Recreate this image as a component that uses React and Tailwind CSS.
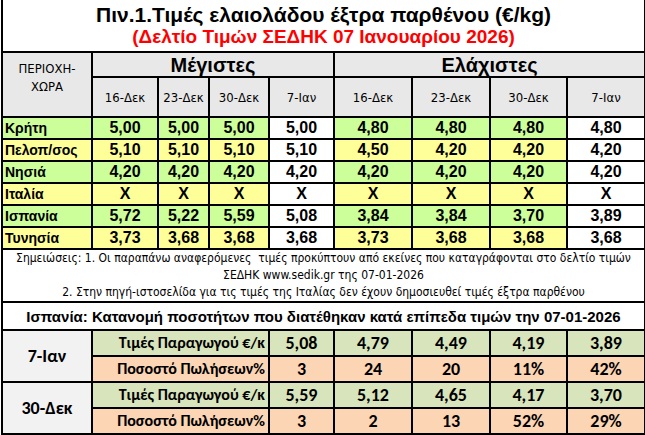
import React from 'react';

const narrow = "font-['Liberation_Sans_Narrow','Arial_Narrow','DejaVu_Sans_Condensed','Liberation_Sans',sans-serif]";
const calibri = "font-['Carlito','Lato','Open_Sans',sans-serif]";

const regions = [
  { name: 'Κρήτη', bg: 'bg-[#ccff99]', max: ['5,00', '5,00', '5,00', '5,00'], min: ['4,80', '4,80', '4,80', '4,80'] },
  { name: 'Πελοπ/σος', bg: 'bg-[#ffff99]', max: ['5,10', '5,10', '5,10', '5,10'], min: ['4,50', '4,20', '4,20', '4,20'] },
  { name: 'Νησιά', bg: 'bg-[#ccff99]', max: ['4,20', '4,20', '4,20', '4,20'], min: ['4,20', '4,20', '4,20', '4,20'] },
  { name: 'Ιταλία', bg: 'bg-[#ffff99]', max: ['X', 'X', 'X', 'X'], min: ['X', 'X', 'X', 'X'] },
  { name: 'Ισπανία', bg: 'bg-[#ccff99]', max: ['5,72', '5,22', '5,59', '5,08'], min: ['3,84', '3,84', '3,70', '3,89'] },
  { name: 'Τυνησία', bg: 'bg-[#ffff99]', max: ['3,73', '3,68', '3,68', '3,68'], min: ['3,73', '3,68', '3,68', '3,68'] },
];

const dates = ['16-Δεκ', '23-Δεκ', '30-Δεκ', '7-Ιαν'];

const spain = [
  { date: '7-Ιαν', prices: ['5,08', '4,79', '4,49', '4,19', '3,89'], shares: ['3', '24', '20', '11%', '42%'] },
  { date: '30-Δεκ', prices: ['5,59', '5,12', '4,65', '4,17', '3,70'], shares: ['3', '2', '13', '52%', '29%'] },
];

const cell = 'border-2 border-black p-0';

export default function App() {
  return (
    <div className="w-[645px] h-[435px] bg-white overflow-hidden font-['Liberation_Sans',Arial,sans-serif] text-black">
      <table className="border-collapse table-fixed w-[643px] ml-px">
        <colgroup>
          <col className="w-[90px]" />
          <col className="w-[66px]" />
          <col className="w-[51px]" />
          <col className="w-[60px]" />
          <col className="w-[65px]" />
          <col className="w-[78px]" />
          <col className="w-[78px]" />
          <col className="w-[77px]" />
          <col className="w-[78px]" />
        </colgroup>
        <tbody>
          {/* title */}
          <tr className="h-[52px]">
            <td colSpan={9} className="border-2 border-black border-t-0 p-0 text-center leading-[22px]">
              <div className="text-[21px] font-bold pt-[1px]">Πιν.1.Τιμές ελαιολάδου έξτρα παρθένου (€/kg)</div>
              <div className="text-[19px] font-bold text-[#ff0000]">(Δελτίο Τιμών ΣΕΔΗΚ 07 Ιανουαρίου 2026)</div>
            </td>
          </tr>

          {/* header */}
          <tr className="h-[25px] bg-[#e8e8e8]">
            <td rowSpan={2} className={`${cell} ${narrow} align-top text-center text-[13px] leading-[18px] pt-[7px]`}>
              ΠΕΡΙΟΧΗ-<br />ΧΩΡΑ
            </td>
            <td colSpan={4} className={`${cell} text-center text-[20px] font-bold leading-none`}>Μέγιστες</td>
            <td colSpan={4} className={`${cell} text-center text-[20px] font-bold leading-none`}>Ελάχιστες</td>
          </tr>
          <tr className="h-[40px] bg-[#e8e8e8]">
            {[...dates, ...dates].map((d, i) => (
              <td key={i} className={`${cell} ${narrow} text-center text-[13px] leading-none`}>{d}</td>
            ))}
          </tr>

          {/* data rows */}
          {regions.map(r => (
            <tr key={r.name} className={`h-[22px] ${r.bg}`}>
              <td className={`${cell} text-left pl-[2px] text-[14px] font-bold leading-none`}>{r.name}</td>
              {[...r.max, ...r.min].map((v, i) => (
                <td key={i} className={`${cell} text-center text-[16px] font-bold leading-none ${i === 3 || i === 7 ? 'bg-white' : ''}`}>{v}</td>
              ))}
            </tr>
          ))}

          {/* notes */}
          <tr className="h-[51px]">
            <td colSpan={9} className={`${cell} ${narrow} text-center text-[12px] leading-[17px]`}>
              <div>Σημειώσεις: 1. Οι παραπάνω αναφερόμενες&nbsp; τιμές προκύπτουν από εκείνες που καταγράφονται στο δελτίο τιμών</div>
              <div>ΣΕΔΗΚ www.sedik.gr της 07-01-2026</div>
              <div>2. Στην πηγή-ιστοσελίδα για τις τιμές της Ιταλίας δεν έχουν δημοσιευθεί τιμές έξτρα παρθένου</div>
            </td>
          </tr>

          {/* spain section */}
          <tr className="h-[28px]">
            <td colSpan={9} className={`${cell} text-center text-[15px] font-bold leading-none whitespace-nowrap`}>
              Ισπανία: Κατανομή ποσοτήτων που διατέθηκαν κατά επίπεδα τιμών την 07-01-2026
            </td>
          </tr>
          {spain.map(s => (
            <React.Fragment key={s.date}>
              <tr className="h-[26px] bg-[#d8e4bc]">
                <td rowSpan={2} className={`${cell} ${calibri} bg-[#f2f2f2] text-center text-[18px] font-bold leading-none`}>{s.date}</td>
                <td colSpan={3} className={`${cell} ${calibri} text-right pr-[3px] text-[16px] font-bold leading-none`}>Τιμές Παραγωγού €/κ</td>
                {s.prices.map((v, i) => (
                  <td key={i} className={`${cell} ${calibri} text-center text-[18px] font-bold leading-none`}>{v}</td>
                ))}
              </tr>
              <tr className="h-[26px] bg-[#fcd5b4]">
                <td colSpan={3} className={`${cell} ${calibri} text-right pr-[3px] text-[16px] font-bold leading-none`}>Ποσοστό Πωλήσεων%</td>
                {s.shares.map((v, i) => (
                  <td key={i} className={`${cell} ${calibri} text-center text-[18px] font-bold leading-none`}>{v}</td>
                ))}
              </tr>
            </React.Fragment>
          ))}
        </tbody>
      </table>
    </div>
  );
}
